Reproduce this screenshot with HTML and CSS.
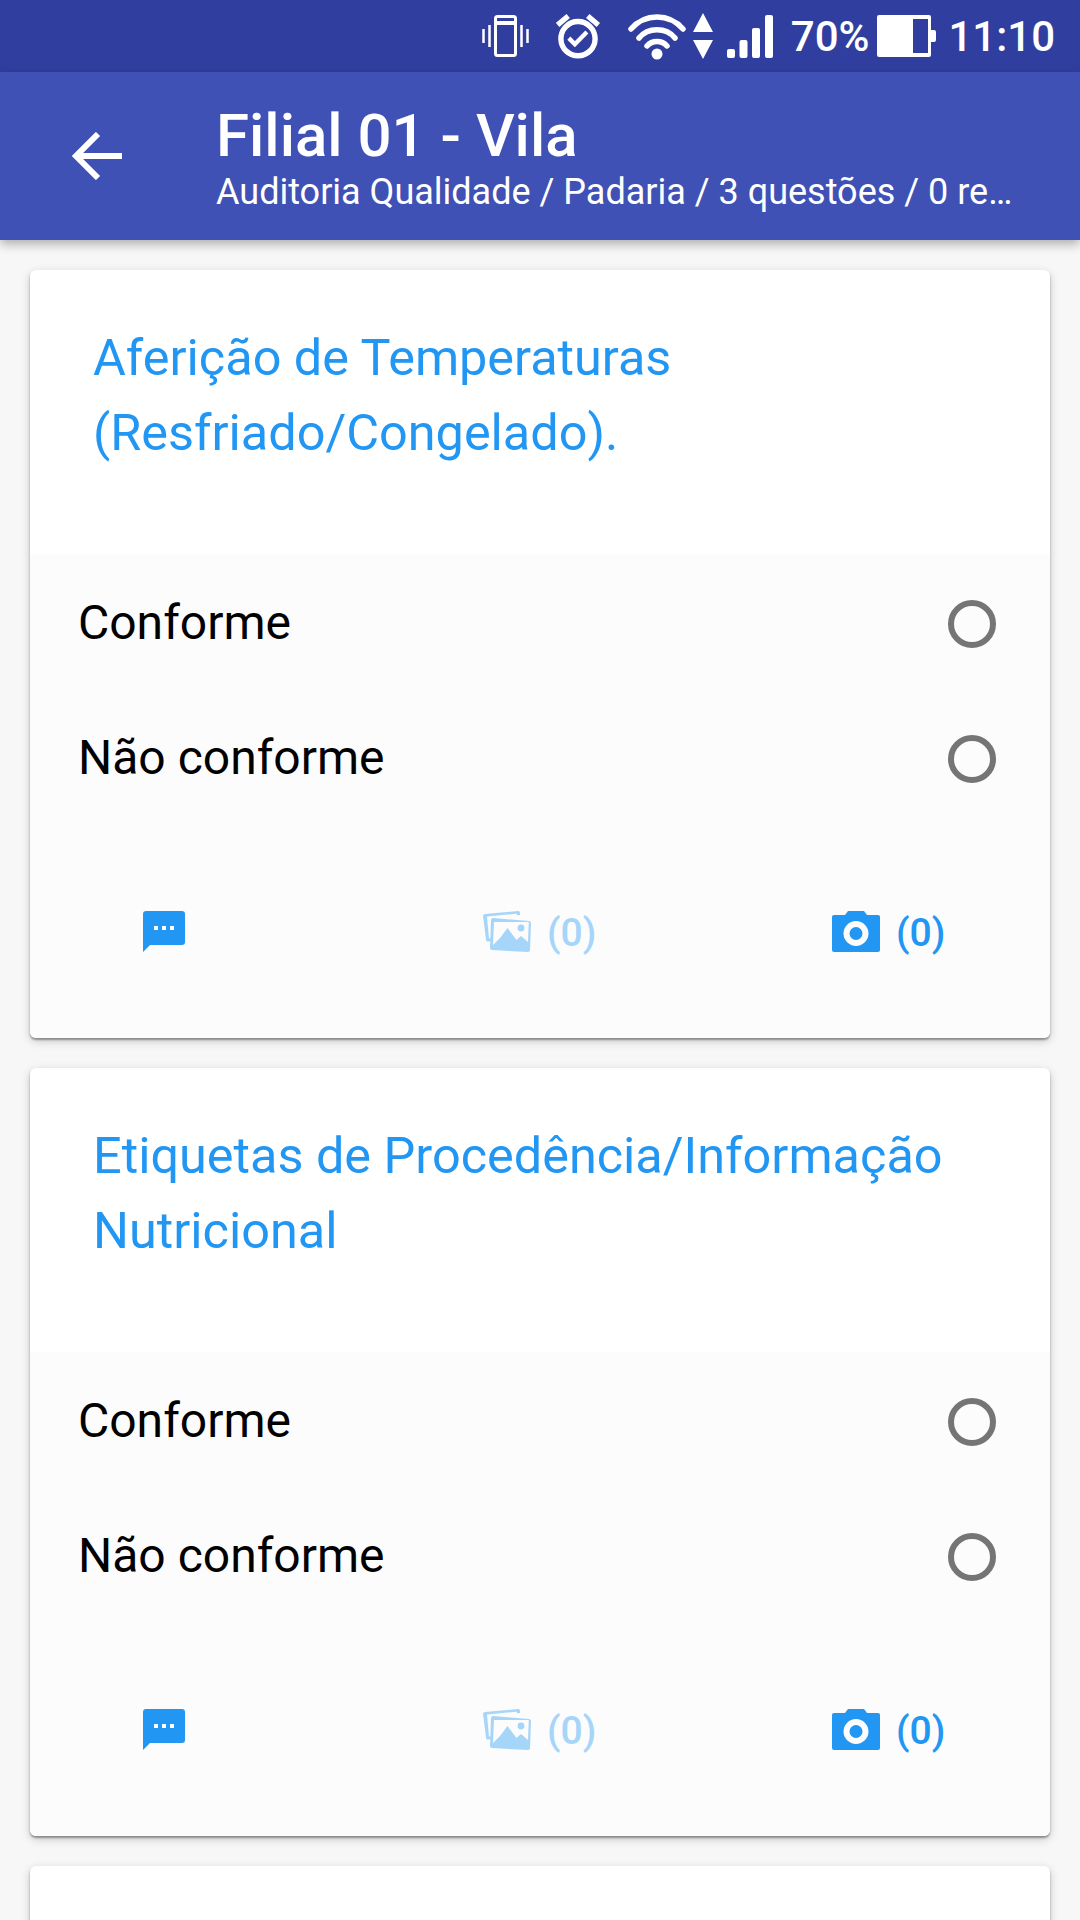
FILE: index.html
```html
<!DOCTYPE html>
<html lang="en">
<head>
    <meta charset="UTF-8">
    <meta name="viewport" content="width=device-width, initial-scale=1.0">
    <title>Filial 01 - Vila</title>
    <link rel="stylesheet" href="styles.css">
</head>
<body>
    <svg class="sprites" width="0" height="0">
        <defs>
            <symbol id="ico-sms" viewBox="0 0 42 41">
                <path d="M3 0h36a3 3 0 0 1 3 3v28a3 3 0 0 1-3 3H7l-7 7V3a3 3 0 0 1 3-3z"/>
                <path fill="#fff" d="M11 15h4v4h-4zM19 15h4v4h-4zM27 15h4v4h-4z"/>
            </symbol>
            <symbol id="ico-gallery" viewBox="0 0 48 41">
                <path fill-rule="evenodd" d="M2 3l33-3c1 0 2 .7 2 1.700v2.300l-3 .2v-1.500L4 5.500l2 22 2-.2v3l-3 .3c-1 0-1.800-.6-1.900-1.600L0 5c0-1 .9-1.900 2-2z"/>
                <path fill-rule="evenodd" d="M10 7l36 3c1 0 2 1 2 2l-1 27c0 1-1 2-2 2L9 39c-1 0-2-1-2-2L8 9c0-1 1-2 2-2zm1 4l-1 23 7-7 7.500-10 9 12 4.500-4 7 6 .8-20z"/>
                <circle cx="38" cy="17" r="3.400"/>
            </symbol>
            <symbol id="ico-camera" viewBox="0 0 48 41">
                <path fill-rule="evenodd" d="M16 0h16l3 4h11a2 2 0 0 1 2 2v33a2 2 0 0 1-2 2H2a2 2 0 0 1-2-2V6a2 2 0 0 1 2-2h11zm8 10a12.500 12.500 0 1 0 0 25 12.500 12.500 0 0 0 0-25z"/>
                <circle cx="24" cy="22.500" r="6.500"/>
            </symbol>
        </defs>
    </svg>

    <div class="status-bar">
        <svg class="st-vibrate" viewBox="0 0 47 42" fill="none" stroke="#fff">
            <rect x="13.500" y="1.500" width="20" height="39" rx="2" stroke-width="3"/>
            <path d="M14 8h19" stroke-width="4"/>
            <path d="M1.500 14v14M7.500 10v22M39.500 10v22M45.500 14v14" stroke-width="2.500"/>
        </svg>
        <svg class="st-alarm" viewBox="1.700 1.500 20.600 21" fill="#fff" stroke="#fff" stroke-width="0.5" preserveAspectRatio="none">
            <path d="M22 5.720l-4.600-3.860-1.290 1.530 4.600 3.860L22 5.720zM7.880 3.390L6.600 1.860 2 5.710l1.290 1.530 4.590-3.850zM12 4c-4.970 0-9 4.030-9 9s4.020 9 9 9c4.970 0 9-4.030 9-9s-4.030-9-9-9zm0 16c-3.870 0-7-3.130-7-7s3.130-7 7-7 7 3.130 7 7-3.130 7-7 7zm-1.460-5.470L8.410 12.400l-1.060 1.060 3.180 3.180 6-6-1.060-1.060-4.930 4.950z"/>
        </svg>
        <svg class="st-wifi" viewBox="0 0 58 47" fill="none" stroke="#fff" stroke-width="5.500" stroke-linecap="round">
            <path d="M3 16C17 0 41 0 55 16"/>
            <path d="M11 25C20 14 38 14 47 25"/>
            <path d="M19 33C24 27 34 27 39 33"/>
            <circle cx="29" cy="41" r="5.500" fill="#fff" stroke="none"/>
        </svg>
        <svg class="st-arrows" viewBox="0 0 20 46" fill="#fff">
            <path d="M10 0l10 19H0zM0 27h20L10 46z"/>
        </svg>
        <svg class="st-signal" viewBox="0 0 46 43" fill="#fff">
            <rect x="0" y="34" width="8" height="9" rx="2"/>
            <rect x="12.500" y="25" width="8" height="18" rx="2"/>
            <rect x="25" y="13" width="8" height="30" rx="2"/>
            <rect x="38" y="0" width="8" height="43" rx="2"/>
        </svg>
        <span class="st-text st-pct">70%</span>
        <svg class="st-battery" viewBox="0 0 59 42">
            <path fill="#fff" d="M2 0h50a2 2 0 0 1 2 2v38a2 2 0 0 1-2 2H2a2 2 0 0 1-2-2V2a2 2 0 0 1 2-2zM54 15h3a2 2 0 0 1 2 2v8a2 2 0 0 1-2 2h-3z"/>
            <rect x="36" y="4" width="15" height="34" fill="#303f9f"/>
        </svg>
        <span class="st-text st-time">11:10</span>
    </div>

    <header class="app-bar">
        <svg class="back" viewBox="0 0 50 48" fill="none" stroke="#fff" stroke-width="6">
            <path d="M50 24H4M26 2L4 24l22 22"/>
        </svg>
        <div class="titles">
            <h1>Filial 01 - Vila</h1>
            <p>Auditoria Qualidade / Padaria / 3 questões / 0 re…</p>
        </div>
    </header>

    <main class="list">
        <section class="card">
            <div class="card-head">
                <h2>Aferição de Temperaturas (Resfriado/Congelado).</h2>
            </div>
            <div class="card-body">
                <label class="option"><span>Conforme</span><i class="radio"></i></label>
                <label class="option"><span>Não conforme</span><i class="radio"></i></label>
                <div class="actions">
                    <span class="action"><svg class="ico-sms"><use href="#ico-sms"/></svg></span>
                    <span class="action faded"><svg class="ico-wide"><use href="#ico-gallery"/></svg>(0)</span>
                    <span class="action"><svg class="ico-wide"><use href="#ico-camera"/></svg>(0)</span>
                </div>
            </div>
        </section>

        <section class="card">
            <div class="card-head">
                <h2>Etiquetas de Procedência/Informação Nutricional</h2>
            </div>
            <div class="card-body">
                <label class="option"><span>Conforme</span><i class="radio"></i></label>
                <label class="option"><span>Não conforme</span><i class="radio"></i></label>
                <div class="actions">
                    <span class="action"><svg class="ico-sms"><use href="#ico-sms"/></svg></span>
                    <span class="action faded"><svg class="ico-wide"><use href="#ico-gallery"/></svg>(0)</span>
                    <span class="action"><svg class="ico-wide"><use href="#ico-camera"/></svg>(0)</span>
                </div>
            </div>
        </section>

        <section class="card"></section>
    </main>
</body>
</html>
```

FILE: styles.css
```css
html, body {
    height: 100%;
    overflow: hidden;
}
body {
    margin: 0;
    background-color: #f7f7f7;
    font-family: Roboto, "Liberation Sans", sans-serif;
    color: #000;
}
.sprites {
    display: block;
    height: 0;
}

/* status bar */
.status-bar {
    height: 72px;
    background-color: #303f9f;
    display: flex;
    align-items: center;
    justify-content: flex-end;
    padding-right: 25px;
    color: #fff;
}
.status-bar svg {
    flex: none;
}
.st-vibrate { width: 47px; height: 42px; margin-right: 27px; }
.st-alarm { width: 44px; height: 45px; margin-right: 28px; }
.st-wifi { width: 58px; height: 47px; margin-right: 7px; }
.st-arrows { width: 20px; height: 46px; margin-right: 14px; }
.st-signal { width: 46px; height: 43px; margin-right: 18px; }
.st-battery { width: 59px; height: 42px; margin-right: 12px; }
.st-text {
    font-size: 42px;
    font-weight: 500;
}
.st-pct { margin-right: 8px; }

/* app bar */
.app-bar {
    height: 168px;
    background-color: #3f51b5;
    display: flex;
    align-items: center;
    padding-left: 72px;
    color: #fff;
    box-shadow: 0 4px 10px rgba(0, 0, 0, 0.3);
    position: relative;
}
.back {
    width: 50px;
    height: 48px;
    flex: none;
}
.titles {
    width: 804px;
    margin-left: 94px;
    margin-top: 5px;
}
.titles h1 {
    margin: 0;
    font-size: 60px;
    font-weight: 500;
    line-height: 66px;
}
.titles p {
    margin: 0;
    font-size: 36px;
    line-height: 46px;
    white-space: nowrap;
}

/* cards */
.list {
    height: 1680px;
    box-sizing: border-box;
    padding: 30px 30px 0;
    display: flex;
    flex-direction: column;
    gap: 30px;
    overflow: hidden;
}
.card {
    flex: none;
    height: 768px;
    background-color: #fff;
    border-radius: 6px;
    box-shadow: 0 2px 2px rgba(0, 0, 0, 0.35), 0 3px 10px rgba(0, 0, 0, 0.2);
    overflow: hidden;
}
.card-head {
    height: 284px;
    box-sizing: border-box;
    padding: 50px 64px 0 63px;
}
.card-head h2 {
    margin: 0;
    font-size: 50.400px;
    font-weight: 400;
    line-height: 75px;
    color: #2196f3;
}
.card-body {
    height: 483px;
    padding-top: 1px;
    background-color: #fcfcfc;
}
.option {
    height: 135px;
    display: flex;
    align-items: center;
    justify-content: space-between;
    padding: 0 54px 0 48px;
    font-size: 48px;
}
.radio {
    width: 48px;
    height: 48px;
    margin-top: 2px;
    box-sizing: border-box;
    border: 6px solid #757575;
    border-radius: 50%;
}
.actions {
    display: grid;
    grid-template-columns: 340px 349px auto;
    padding: 85px 0 0 113px;
}
.action {
    display: flex;
    align-items: center;
    gap: 16px;
    height: 41px;
    padding-top: 2px;
    font-size: 39px;
    font-weight: 500;
    color: #2196f3;
    fill: #2196f3;
}
.action svg {
    margin-top: -2px;
}
.action.faded {
    color: #a6d5fa;
    fill: #a6d5fa;
}
.ico-sms {
    width: 42px;
    height: 41px;
}
.ico-wide {
    width: 48px;
    height: 41px;
}
```
